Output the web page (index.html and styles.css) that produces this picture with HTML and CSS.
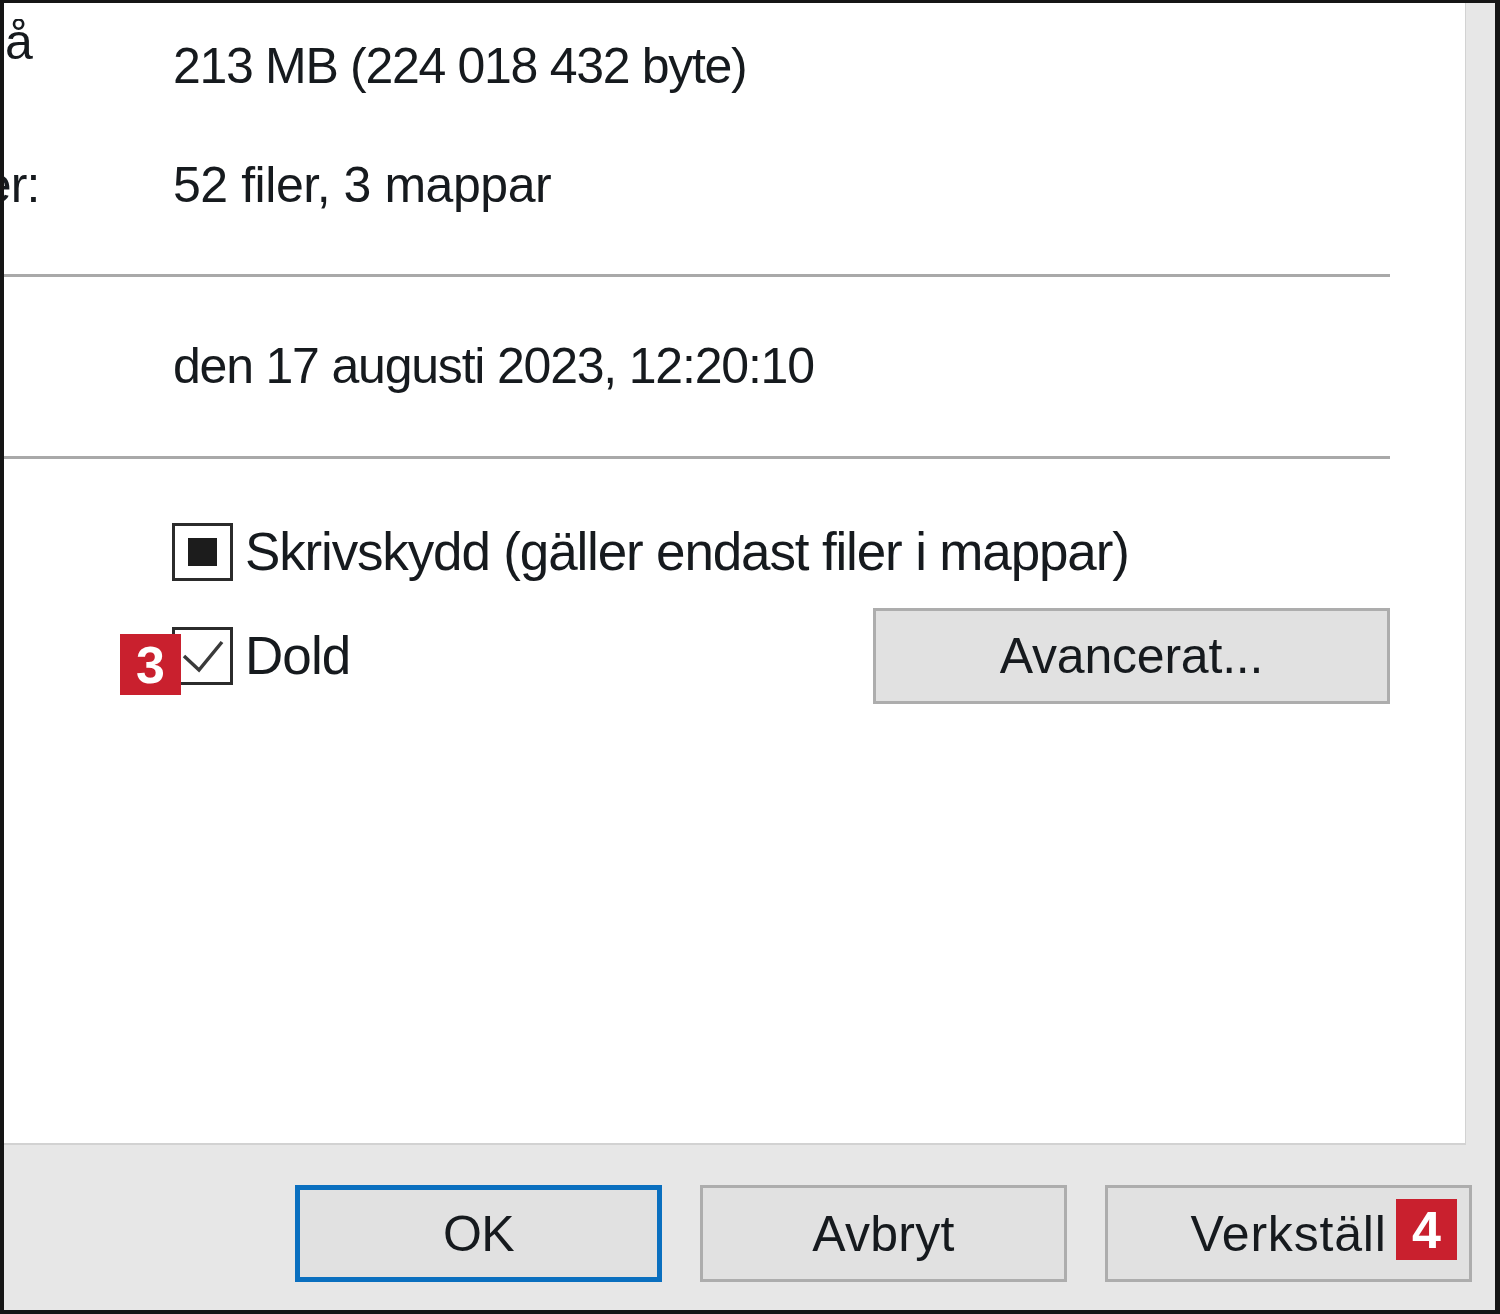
FILE: index.html
```html
<!DOCTYPE html>
<html lang="sv">
<head>
<meta charset="utf-8">
<link rel="stylesheet" href="styles.css">
</head>
<body>
<div class="dialog">
  <div class="main">
    <div class="panel">
      <div class="row row-size">
        <div class="label"><span>Storlek på</span></div>
        <div class="value value-size">213 MB (224 018 432 byte)</div>
      </div>
      <div class="row row-count">
        <div class="label"><span>Innehåller:</span></div>
        <div class="value value-count">52 filer, 3 mappar</div>
      </div>
      <div class="sep sep-1"></div>
      <div class="row row-date">
        <div class="label"><span>Skapad:</span></div>
        <div class="value value-date">den 17 augusti 2023, 12:20:10</div>
      </div>
      <div class="sep sep-2"></div>
      <div class="check-row check-row-1">
        <span class="box box-mixed"><span class="mixed"></span></span>
        <span class="check-text check-text-ro">Skrivskydd (gäller endast filer i mappar)</span>
      </div>
      <div class="check-row check-row-2">
        <span class="box">
          <svg class="tick" viewBox="0 0 55 52" width="55" height="52"><polyline points="9,26 24,40 47,12" fill="none" stroke="#3a3a3a" stroke-width="3.5"/></svg>
          <span class="badge badge-3">3</span>
        </span>
        <span class="check-text">Dold</span>
        <span class="btn btn-adv">Avancerat...</span>
      </div>
    </div>
  </div>
  <div class="footer">
    <span class="btn btn-foot btn-ok">OK</span>
    <span class="btn btn-foot">Avbryt</span>
    <span class="btn btn-foot btn-apply">Verkställ<span class="badge badge-4">4</span></span>
  </div>
</div>
</body>
</html>
```
FILE: styles.css
```css
* { box-sizing: border-box; }
html, body { margin: 0; padding: 0; }
body {
  font-family: "Liberation Sans", Arial, sans-serif;
  color: #161a1e;
  background: #e7e7e7;
}
.dialog {
  width: 1500px;
  height: 1314px;
  border-style: solid;
  border-color: #151515;
  border-width: 3px 5px 4px 4px;
  background: #e7e7e7;
  display: flex;
  flex-direction: column;
  overflow: hidden;
}
.main {
  height: 1142px;
  display: flex;
  padding-right: 29px;
}
.panel {
  flex: 1;
  background: #ffffff;
  border-right: 1px solid #d2d2d2;
  border-bottom: 2px solid #d2d2d2;
  overflow: hidden;
  padding-top: 16px;
  font-size: 50px;
  letter-spacing: -0.8px;
}
.row {
  display: flex;
  align-items: center;
}
.row-size { align-items: flex-start; }
.label {
  width: 169px;
  flex: none;
  overflow: hidden;
  line-height: 47px;
}
.label span {
  display: block;
  margin-left: -189px;
  white-space: nowrap;
}
.row-count .label, .row-date .label { line-height: 60px; }
.value {
  line-height: 60px;
  white-space: nowrap;
}
.value-size { margin-top: 17px; letter-spacing: -1.3px; }
.value-count { letter-spacing: -0.45px; }
.value-date { letter-spacing: -1.2px; }
.row-count { margin-top: 59px; }
.sep {
  height: 3px;
  background: #a9a9a9;
  margin-right: 75px;
}
.sep-1 { margin-top: 59px; }
.row-date { margin-top: 59px; }
.sep-2 { margin-top: 60px; }
.check-row {
  display: flex;
  align-items: center;
  margin-left: 168px;
  margin-right: 75px;
  line-height: 60px;
}
.check-row-1 { margin-top: 63px; height: 60px; }
.check-row-2 { margin-top: 26px; }
.box {
  position: relative;
  width: 61px;
  height: 58px;
  border: 3px solid #2b2b2b;
  background: #fff;
  flex: none;
  display: flex;
  align-items: center;
  justify-content: center;
}
.mixed {
  width: 29px;
  height: 28px;
  background: #1c1c1c;
}
.tick { display: block; }
.check-text {
  margin-left: 12px;
  white-space: nowrap;
  font-size: 53px;
  letter-spacing: -0.9px;
}
.check-text-ro { letter-spacing: -1.15px; }
.btn {
  background: #e1e1e1;
  border: 3px solid #adadad;
  display: flex;
  align-items: center;
  justify-content: center;
  white-space: nowrap;
  font-size: 50px;
  letter-spacing: 0.3px;
  color: #161a1e;
}
.btn-adv {
  margin-left: auto;
  width: 517px;
  height: 96px;
  letter-spacing: -0.2px;
}
.footer {
  flex: 1;
  display: flex;
  justify-content: flex-end;
  align-items: flex-start;
  gap: 38px;
  padding-top: 40px;
  padding-right: 23px;
}
.btn-foot {
  width: 367px;
  height: 97px;
  position: relative;
}
.btn-ok {
  border: 5px solid #0a6fbf;
  letter-spacing: -0.5px;
}
.btn-apply { letter-spacing: 0.8px; }
.badge {
  position: absolute;
  width: 61px;
  height: 61px;
  background: #c9202e;
  color: #ffffff;
  font-weight: bold;
  font-size: 52px;
  letter-spacing: 0;
  display: flex;
  align-items: center;
  justify-content: center;
  line-height: 1;
}
.badge-3 { left: -55px; top: 4px; }
.badge-4 { left: 288px; top: 11px; }
```
